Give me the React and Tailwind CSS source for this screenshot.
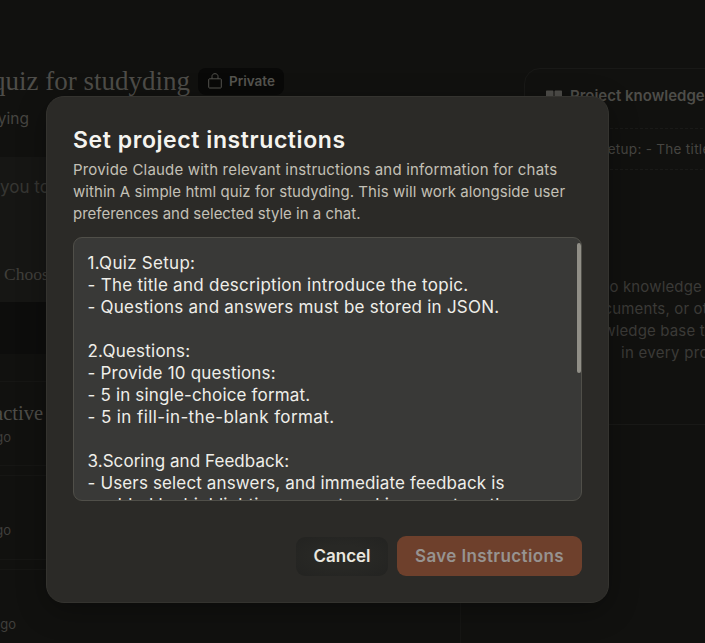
import React from "react";

const SANS = "font-['Inter','Liberation_Sans',sans-serif]";
const SERIF = "font-['Liberation_Serif',serif]";

const instructions = [
  ["1.Quiz Setup:", "tracking-[0.28px]"],
  ["- The title and description introduce the topic.", "tracking-[0.27px]"],
  ["- Questions and answers must be stored in JSON.", "tracking-[0.24px]"],
  ["", ""],
  ["2.Questions:", "tracking-[0.22px]"],
  ["- Provide 10 questions:", "tracking-[0.2px]"],
  ["- 5 in single-choice format.", "tracking-[0.17px]"],
  ["- 5 in fill-in-the-blank format.", "tracking-[0.4px]"],
  ["", ""],
  ["3.Scoring and Feedback:", "tracking-[0.06px]"],
  ["- Users select answers, and immediate feedback is", "tracking-[0.14px]"],
  ["enabled by highlighting correct and incorrect on the", "tracking-[0.22px]"],
];

function LockIcon() {
  return (
    <svg className="h-[16px] w-[14px]" viewBox="0 0 14 16" fill="none" stroke="currentColor" strokeWidth="1">
      <rect x="0.7" y="5.8" width="12.6" height="9.2" rx="0.8" />
      <path d="M4 5.8V3.4C4 1.7 5.2.7 7 .7s3 1 3 2.7v2.4" />
    </svg>
  );
}

function BookIcon() {
  return (
    <svg className="h-[13px] w-[16px] shrink-0" viewBox="0 0 16 13" fill="currentColor">
      <path d="M1 0.5h5.2c.8 0 1.3.5 1.3 1.2V12.5H0V1.5c0-.6.4-1 1-1ZM15 .5H9.8c-.8 0-1.3.5-1.3 1.2v10.8H16v-11c0-.6-.4-1-1-1Z" />
    </svg>
  );
}

function LeftColumn() {
  return (
    <div className="flex h-full w-[461px] shrink-0 flex-col">
      <div className="mt-[67px] flex h-[28px] shrink-0 items-center gap-[8px]">
        <div className="flex w-[190px] justify-end">
          <span className={`${SERIF} shrink-0 text-[27px] leading-[28px] whitespace-nowrap text-[#4e4d49]`}>A simple html quiz for studyding</span>
        </div>
        <div className="flex h-[27px] w-[86px] items-center justify-center gap-[7px] rounded-lg bg-[#090908] pl-px text-[#55544f]">
          <LockIcon />
          <span className="text-[13.5px] font-semibold">Private</span>
        </div>
      </div>
      <div className="mt-[13px] flex h-[22px] w-[29px] shrink-0 justify-end">
        <span className="shrink-0 text-[15.5px] leading-[22px] whitespace-nowrap text-[#464541]">studying</span>
      </div>
      <div className="mt-[27px] h-[145px] shrink-0 bg-[#161614] pt-[19px]">
        <div className="text-[17px] leading-[22px] whitespace-nowrap text-[#363633]">you today?</div>
        <div className={`${SERIF} mt-[64px] pl-[4px] text-[17.5px] leading-[24px] text-[#403f3b]`}>Choose style</div>
      </div>
      <div className="h-[52px] shrink-0 bg-[#0d0d0c]" />
      <div className="mt-[27px] h-[85px] shrink-0 rounded-r-lg border-y border-r border-[#161614] pt-[19px]">
        <div className="flex h-[24px] w-[43px] justify-end">
          <span className={`${SERIF} shrink-0 text-[20.5px] leading-[24px] whitespace-nowrap text-[#4e4d49]`}>Interactive</span>
        </div>
        <div className="flex w-[11px] justify-end">
          <span className="shrink-0 text-[13px] leading-[24px] whitespace-nowrap text-[#403f3c]">minutes ago</span>
        </div>
      </div>
      <div className="mt-[9px] h-[85px] shrink-0 rounded-r-lg border-y border-r border-[#161614] pt-[42px]">
        <div className="flex w-[11px] justify-end">
          <span className="shrink-0 text-[13px] leading-[24px] whitespace-nowrap text-[#403f3c]">minutes ago</span>
        </div>
      </div>
      <div className="mt-[9px] h-[85px] shrink-0 rounded-tr-lg border-t border-r border-[#161614] pt-[42px]">
        <div className="flex w-[16px] justify-end">
          <span className="shrink-0 text-[13px] leading-[24px] whitespace-nowrap text-[#403f3c]">hours ago</span>
        </div>
      </div>
    </div>
  );
}

function KnowledgePanel() {
  return (
    <div className="mt-[68px] ml-[63px] h-[357px] w-[360px] shrink-0 rounded-[16px] border border-[#191917]">
      <div className="flex h-[59px] items-center gap-[8px] pb-[5px] pl-[21px] text-[#4e4d49]">
        <BookIcon />
        <span className="text-[15px] font-semibold whitespace-nowrap">Project knowledge</span>
      </div>
      <div className="flex h-[42px] items-center border-y border-dashed border-[#1a1a18] pl-[30px] text-[13.5px] text-[#464541]">
        <span className="tracking-[0.3px] whitespace-nowrap">1.Quiz Setup: - The title and description</span>
      </div>
      <div className="pt-[106px] text-[15px] leading-[22px] tracking-[0.15px] whitespace-nowrap text-[#3b3a37]">
        <div className="pl-[73px]">No knowledge added yet.</div>
        <div className="pl-[60px]">documents, or other</div>
        <div className="pl-[52px]">knowledge base that</div>
        <div className="pl-[96px] tracking-[0.3px]">in every project</div>
      </div>
    </div>
  );
}

function InstructionsDialog() {
  return (
    <div className="absolute top-[96px] left-[46px] flex h-[507px] w-[563px] flex-col rounded-[18px] border border-[#34332f] bg-[#2b2a27] px-[26px] pt-[28px] shadow-[0_8px_30px_rgba(0,0,0,0.3)]">
      <h2 className="text-[23px] leading-[30px] font-semibold tracking-[0.58px] whitespace-nowrap text-[#f5f4ef]">Set project instructions</h2>
      <div className="mt-[4px] text-[15px] leading-[22px] whitespace-nowrap text-[#c3c0b6]">
        <div><span className="tracking-[0.19px]">Provide Claude with relevant instructions and information for chats</span></div>
        <div><span className="tracking-[0.06px]">within A simple html quiz for studyding. This will work alongside user</span></div>
        <div><span>preferences and selected style in a chat.</span></div>
      </div>
      <div className="mt-[12px] flex h-[264px] w-[509px] shrink-0 justify-between overflow-hidden rounded-[9px] border border-[#504f49] bg-[#393937]">
        <div className="pt-[14px] pl-[13.5px] text-[17px] leading-[22px] whitespace-nowrap text-[#efeee9]">
          {instructions.map(([text, tracking], i) => (
            <div key={i} className="h-[22px]"><span className={tracking}>{text}</span></div>
          ))}
        </div>
        <div className="mt-[5px] h-[130px] w-[4px] rounded-full bg-[#918f87]" />
      </div>
      <div className="mt-[35px] flex items-center justify-end gap-[9px] text-[17px] font-semibold">
        <button className="h-[39px] w-[92px] rounded-[9px] bg-[radial-gradient(ellipse_at_center,#282825_40%,#232321)] pt-[2px] text-[#e8e6df]"><span>Cancel</span></button>
        <button className="h-[40px] w-[185px] rounded-[9px] bg-[#6e402c] pt-[2px] text-[#979390]"><span className="tracking-[0.38px]">Save Instructions</span></button>
      </div>
    </div>
  );
}

export default function App() {
  return (
    <div className={`${SANS} relative flex h-[643px] w-[705px] overflow-hidden bg-[#11110f]`}>
      <LeftColumn />
      <KnowledgePanel />
      <InstructionsDialog />
    </div>
  );
}
